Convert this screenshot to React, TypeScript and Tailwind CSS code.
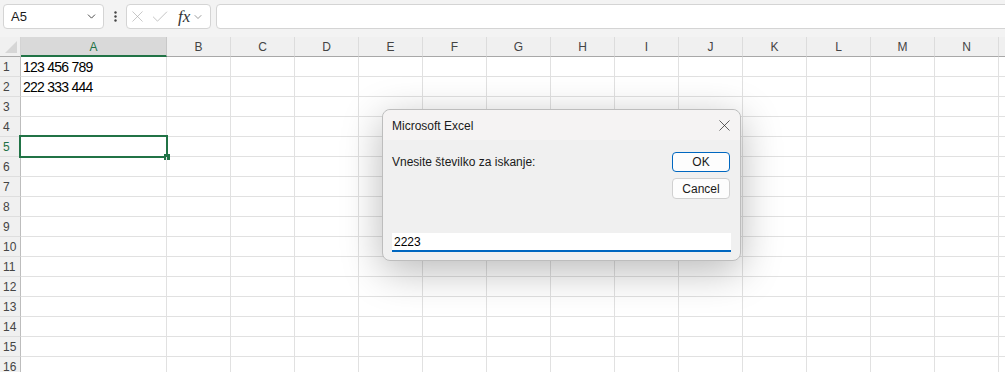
import { X, Check, ChevronDown } from "lucide-react";

const cols = ["B", "C", "D", "E", "F", "G", "H", "I", "J", "K", "L", "M", "N", ""];
const rows = Array.from({ length: 16 }, (_, i) => i + 1);
const data: Record<number, string> = { 1: "123 456 789", 2: "222 333 444" };

function FormulaBar() {
  return (
    <div className="flex h-[37px] items-start bg-[#f3f3f3] pl-[3px] pt-[4px]">
      <div className="flex h-[25px] w-[101px] items-center justify-between rounded-[4px] border border-[#d4d4d4] bg-white pl-[7px] pr-[5px] text-[13px] text-[#1a1a1a]">
        <span>A5</span>
        <ChevronDown size={13} strokeWidth={1.6} className="text-[#333]" />
      </div>
      <div className="flex h-[25px] w-[22px] items-center justify-center">
        <svg width="3" height="11" viewBox="0 0 3 11" className="fill-[#444]">
          <circle cx="1.5" cy="1.5" r="1.2" />
          <circle cx="1.5" cy="5.5" r="1.2" />
          <circle cx="1.5" cy="9.5" r="1.2" />
        </svg>
      </div>
      <div className="flex h-[25px] w-[85px] items-center rounded-[4px] border border-[#d4d4d4] bg-white pl-[1px]">
        <X size={19} strokeWidth={0.8} className="text-[#a8a8a8]" />
        <Check size={20} strokeWidth={0.8} className="ml-[3px] text-[#a8a8a8]" />
        <span className="ml-[8px] font-['Liberation_Serif',serif] text-[17px] italic leading-none text-[#333]">fx</span>
        <ChevronDown size={12} strokeWidth={1.3} className="ml-[2px] text-[#666]" />
      </div>
      <div className="ml-[5px] h-[25px] flex-1 -mr-[6px] rounded-[4px] border border-[#d4d4d4] bg-white" />
    </div>
  );
}

function HeaderRow() {
  return (
    <div className="flex h-[20px] bg-[#f0f0f0] text-[12px] text-[#444]">
      <div className="flex w-[21px] shrink-0 items-end justify-end border-b border-r border-[#a8a8a8] border-r-[#d4d4d4] pb-[3px] pr-[3px]">
        <svg width="12" height="12" viewBox="0 0 12 12">
          <polygon points="12,0 12,12 0,12" fill="#d6d6d6" />
        </svg>
      </div>
      <div className="flex w-[146px] shrink-0 items-center justify-center border-b-2 border-r border-b-[#217346] border-r-[#c8c8c8] bg-[#d9d9d9] pt-[1px] text-[#1e7145]">
        A
      </div>
      {cols.map((c, i) => (
        <div key={i} className="flex w-[64px] shrink-0 items-center justify-center border-b border-r border-b-[#a8a8a8] border-r-[#dcdcdc]">
          {c}
        </div>
      ))}
    </div>
  );
}

function DataRow({ n }: { n: number }) {
  const selected = n === 5;
  return (
    <div className="flex h-[20px]">
      <div className={`flex w-[21px] shrink-0 items-center border-b border-r border-b-[#dedede] border-r-[#bdbdbd] bg-[#f0f0f0] pl-[3px] text-[12px] ${selected ? "text-[#1e7145]" : "text-[#444]"}`}>
        {n}
      </div>
      <div className="relative flex w-[146px] shrink-0 items-center border-b border-r border-[#e1e1e1] pl-[2px] pt-[1px] text-[14px] tracking-[-0.75px] text-black">
        {data[n] ?? ""}
        {selected ? (
          <>
            <div className="absolute -left-[2px] -top-[2px] h-[23px] w-[149px] border-2 border-[#217346]" />
            <div className="absolute left-[143px] top-[17px] h-[6px] w-[6px] bg-[#217346]" />
          </>
        ) : null}
      </div>
      {cols.map((c, i) => (
        <div key={i} className="w-[64px] shrink-0 border-b border-r border-[#e1e1e1]" />
      ))}
    </div>
  );
}

function InputDialog() {
  return (
    <div className="absolute left-[382px] top-[109px] flex h-[152px] w-[359px] flex-col rounded-[8px] border border-[#bdbdbd] bg-[#f0f0f0] text-[12px] text-[#1a1a1a] shadow-[0_10px_40px_rgba(0,0,0,0.28)]">
      <div className="flex h-[30px] items-center justify-between rounded-t-[8px] bg-[#f5f3f3] pl-[9px] pr-[6px]">
        <span className="pt-[1px]">Microsoft Excel</span>
        <X size={19} strokeWidth={0.9} className="text-[#222]" />
      </div>
      <div className="flex flex-1 flex-col pb-[8px] pl-[9px] pr-[10px] pt-[12px]">
        <div className="flex justify-between">
          <span className="pt-[1px]">Vnesite številko za iskanje:</span>
          <div className="flex flex-col gap-[6px]">
            <button className="h-[20px] w-[58px] rounded-[4px] border border-[#0067c0] bg-[#fdfdfd] text-[12px]">OK</button>
            <button className="h-[21px] w-[58px] rounded-[4px] border border-[#d0d0d0] bg-[#fdfdfd] text-[12px]">Cancel</button>
          </div>
        </div>
        <input
          readOnly
          value="2223"
          className="mt-auto h-[19px] w-[339px] border-b-2 border-[#0067c0] bg-white pl-[2px] text-[12px] text-black outline-none"
        />
      </div>
    </div>
  );
}

export default function App() {
  return (
    <div className="relative h-[372px] w-[1005px] overflow-hidden bg-white font-['Liberation_Sans',sans-serif]">
      <FormulaBar />
      <HeaderRow />
      {rows.map((n) => (
        <DataRow key={n} n={n} />
      ))}
      <InputDialog />
    </div>
  );
}
